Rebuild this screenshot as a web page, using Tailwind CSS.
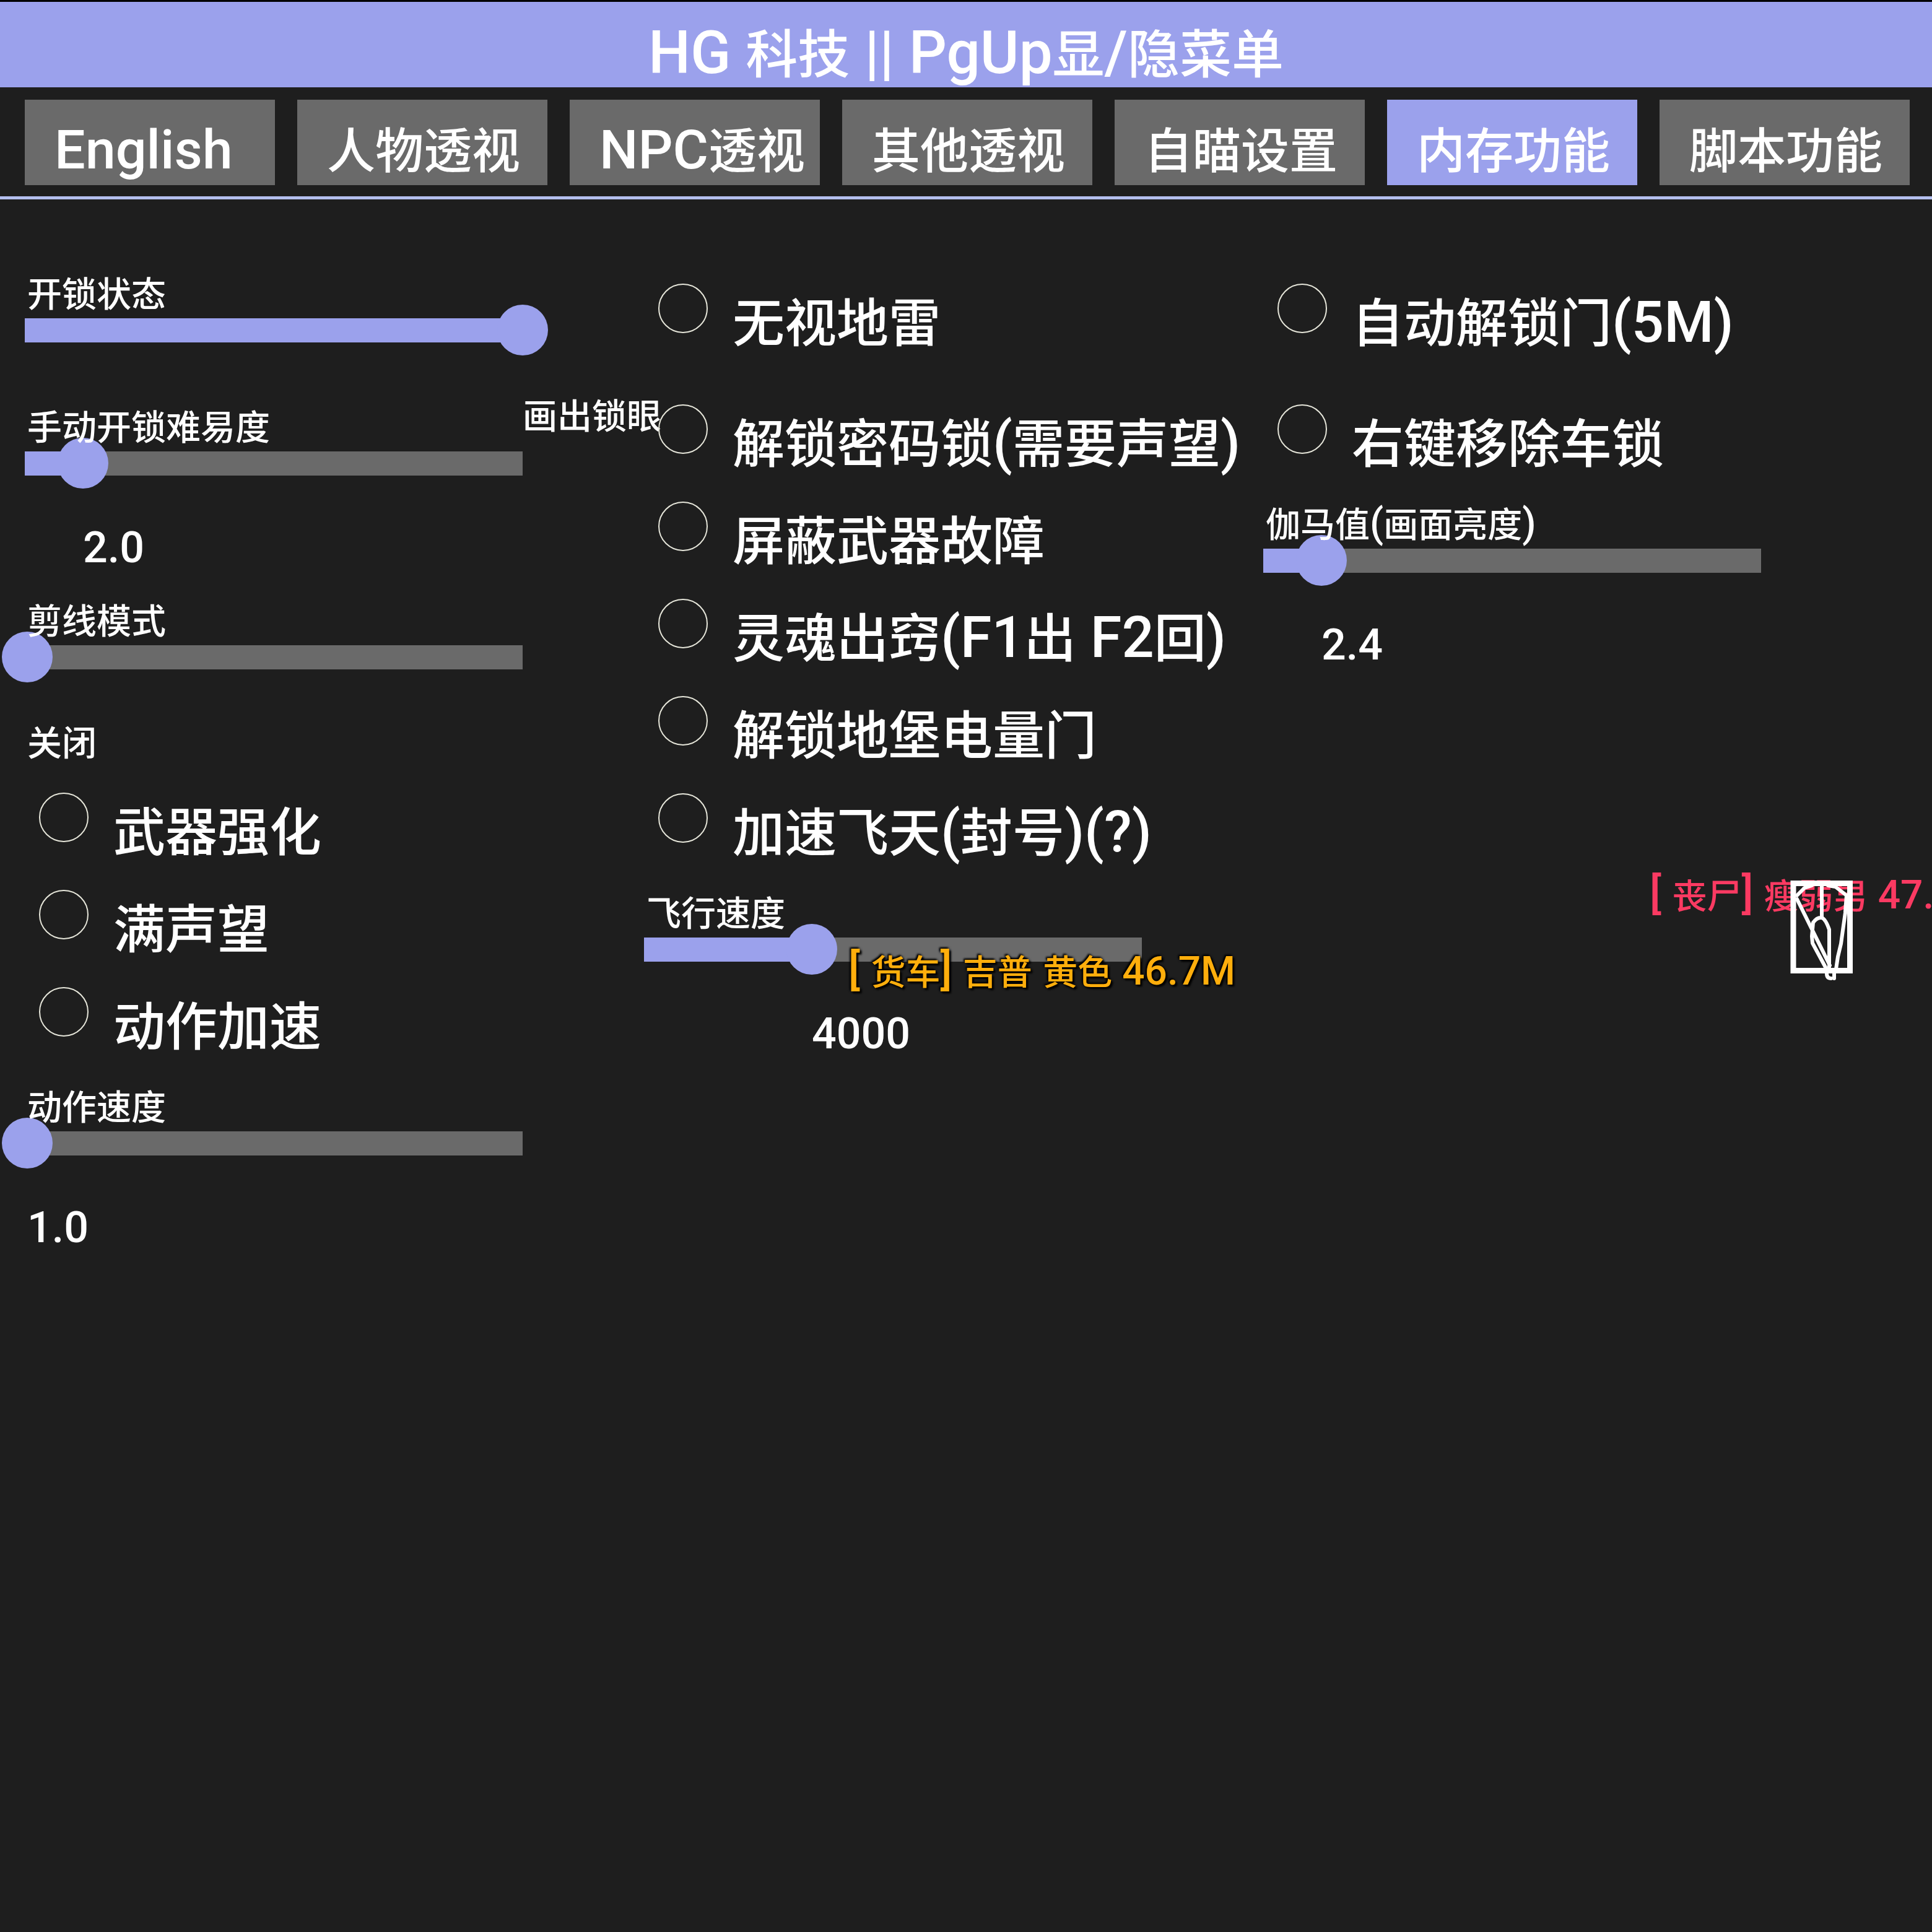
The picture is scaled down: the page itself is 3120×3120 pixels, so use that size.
<!DOCTYPE html>
<html lang="zh-CN">
<head>
  <meta charset="UTF-8" />
  <meta name="viewport" content="width=device-width, initial-scale=1.0" />
  <title>HG 科技</title>
  <script src="https://cdn.jsdelivr.net/npm/@tailwindcss/browser@4"></script>
</head>
<body class="relative min-h-screen overflow-x-hidden bg-[#1e1e1e] text-white font-medium font-['Roboto','Noto_Sans_CJK_SC',sans-serif]">

  <!-- 标题栏 -->
  <header class="h-[141px] border-t-3 border-black bg-[#9ba1ec] pt-8 text-center">
    <h1 class="text-[84px] leading-[100px] whitespace-nowrap"><span class="text-[96px]">HG </span>科技<span class="text-[96px]"> || PgUp</span>显<span class="text-[96px]">/</span>隐菜单</h1>
  </header>

  <!-- 标签页 -->
  <nav class="grid grid-cols-7 gap-9 border-b-5 border-[#b4bfee] pt-5 pr-9 pb-[18px] pl-10 text-[78px] leading-[96px] whitespace-nowrap">
    <button class="h-[138px] bg-[#6a6a6a] pt-8 pl-12 text-left"><span class="text-[88px] leading-0">English</span></button>
    <button class="h-[138px] bg-[#6a6a6a] pt-8 pl-12 text-left">人物透视</button>
    <button class="h-[138px] bg-[#6a6a6a] pt-8 pl-12 text-left"><span class="text-[88px] leading-0">NPC</span>透视</button>
    <button class="h-[138px] bg-[#6a6a6a] pt-8 pl-12 text-left">其他透视</button>
    <button class="h-[138px] bg-[#6a6a6a] pt-8 pl-12 text-left">自瞄设置</button>
    <button class="h-[138px] bg-[#9ba1ec] pt-8 pl-12 text-left">内存功能</button>
    <button class="h-[138px] bg-[#6a6a6a] pt-8 pl-12 text-left">脚本功能</button>
  </nav>

  <main class="grid grid-cols-[1000px_1000px_1fr] pt-[78px] pl-10 whitespace-nowrap">

    <!-- 第一列 -->
    <section>
      <div class="h-[215px] pt-12">
        <label for="lockState" class="relative z-10 block pl-1 text-[56px] leading-[56px]">开锁状态</label>
        <div class="-mt-3 grid grid-cols-[804px] items-center">
          <div class="h-[39px] bg-[#6a6a6a] [grid-area:1/1]"><div class="h-full bg-[#9ba1ec]" style="width: 100%"></div></div>
          <input id="lockState" type="range" min="0" max="1000" value="1000" class="-ml-[41px] h-[82px] w-[886px] appearance-none bg-transparent [grid-area:1/1] [&::-webkit-slider-thumb]:size-[82px] [&::-webkit-slider-thumb]:appearance-none [&::-webkit-slider-thumb]:rounded-full [&::-webkit-slider-thumb]:bg-[#9ba1ec]">
        </div>
        <div class="w-[804px] pt-[71px]"><output for="lockState" class="block text-[56px] leading-[56px]" style="margin-left: 100%">画出锁眼</output></div>
      </div>

      <div class="h-[313px] pt-12">
        <label for="lockLevel" class="relative z-10 block pl-1 text-[56px] leading-[56px]">手动开锁难易度</label>
        <div class="-mt-3 grid grid-cols-[804px] items-center">
          <div class="h-[39px] bg-[#6a6a6a] [grid-area:1/1]"><div class="h-full bg-[#9ba1ec]" style="width: 11.7%"></div></div>
          <input id="lockLevel" type="range" min="0" max="1000" value="117" class="-ml-[41px] h-[82px] w-[886px] appearance-none bg-transparent [grid-area:1/1] [&::-webkit-slider-thumb]:size-[82px] [&::-webkit-slider-thumb]:appearance-none [&::-webkit-slider-thumb]:rounded-full [&::-webkit-slider-thumb]:bg-[#9ba1ec]">
        </div>
        <div class="w-[804px] pt-[60px]"><output for="lockLevel" class="block text-[70px] leading-[70px]" style="margin-left: 11.7%">2.0</output></div>
      </div>

      <div class="h-[314px] pt-12">
        <label for="wireMode" class="relative z-10 block pl-1 text-[56px] leading-[56px]">剪线模式</label>
        <div class="-mt-3 grid grid-cols-[804px] items-center">
          <div class="h-[39px] bg-[#6a6a6a] [grid-area:1/1]"></div>
          <input id="wireMode" type="range" min="0" max="1000" value="5" class="-ml-[41px] h-[82px] w-[886px] appearance-none bg-transparent [grid-area:1/1] [&::-webkit-slider-thumb]:size-[82px] [&::-webkit-slider-thumb]:appearance-none [&::-webkit-slider-thumb]:rounded-full [&::-webkit-slider-thumb]:bg-[#9ba1ec]">
        </div>
        <div class="w-[804px] pt-[71px]"><output for="wireMode" class="block text-[56px] leading-[56px]" style="margin-left: 0.5%">关闭</output></div>
      </div>

      <div class="flex h-[157px] gap-10 pt-[38px] pl-[23px]">
        <input id="weapon" type="checkbox" class="size-20 appearance-none rounded-full border-2 border-[#e6e6da] checked:bg-[#9ba1ec]">
        <label for="weapon" class="pt-6 text-[84px] leading-[84px]">武器强化</label>
      </div>
      <div class="flex h-[157px] gap-10 pt-[38px] pl-[23px]">
        <input id="fame" type="checkbox" class="size-20 appearance-none rounded-full border-2 border-[#e6e6da] checked:bg-[#9ba1ec]">
        <label for="fame" class="pt-6 text-[84px] leading-[84px]">满声望</label>
      </div>
      <div class="flex h-[157px] gap-10 pt-[38px] pl-[23px]">
        <input id="action" type="checkbox" class="size-20 appearance-none rounded-full border-2 border-[#e6e6da] checked:bg-[#9ba1ec]">
        <label for="action" class="pt-6 text-[84px] leading-[84px]">动作加速</label>
      </div>

      <div class="h-[314px] pt-12">
        <label for="actionSpeed" class="relative z-10 block pl-1 text-[56px] leading-[56px]">动作速度</label>
        <div class="-mt-3 grid grid-cols-[804px] items-center">
          <div class="h-[39px] bg-[#6a6a6a] [grid-area:1/1]"></div>
          <input id="actionSpeed" type="range" min="0" max="1000" value="5" class="-ml-[41px] h-[82px] w-[886px] appearance-none bg-transparent [grid-area:1/1] [&::-webkit-slider-thumb]:size-[82px] [&::-webkit-slider-thumb]:appearance-none [&::-webkit-slider-thumb]:rounded-full [&::-webkit-slider-thumb]:bg-[#9ba1ec]">
        </div>
        <div class="w-[804px] pt-[60px]"><output for="actionSpeed" class="block text-[70px] leading-[70px]" style="margin-left: 0.5%">1.0</output></div>
      </div>
    </section>

    <!-- 第二列 -->
    <section class="pt-5">
      <div class="flex h-[195px] gap-10 pt-[38px] pl-[23px]">
        <input id="mines" type="checkbox" class="size-20 appearance-none rounded-full border-2 border-[#e6e6da] checked:bg-[#9ba1ec]">
        <label for="mines" class="pt-6 text-[84px] leading-[84px]">无视地雷</label>
      </div>
      <div class="flex h-[157px] gap-10 pt-[38px] pl-[23px]">
        <input id="codeLock" type="checkbox" class="size-20 appearance-none rounded-full border-2 border-[#e6e6da] checked:bg-[#9ba1ec]">
        <label for="codeLock" class="pt-6 text-[84px] leading-[84px]">解锁密码锁<span class="text-[92px] leading-0">(</span>需要声望<span class="text-[92px] leading-0">)</span></label>
      </div>
      <div class="flex h-[157px] gap-10 pt-[38px] pl-[23px]">
        <input id="malfunction" type="checkbox" class="size-20 appearance-none rounded-full border-2 border-[#e6e6da] checked:bg-[#9ba1ec]">
        <label for="malfunction" class="pt-6 text-[84px] leading-[84px]">屏蔽武器故障</label>
      </div>
      <div class="flex h-[157px] gap-10 pt-[38px] pl-[23px]">
        <input id="soul" type="checkbox" class="size-20 appearance-none rounded-full border-2 border-[#e6e6da] checked:bg-[#9ba1ec]">
        <label for="soul" class="pt-6 text-[84px] leading-[84px]">灵魂出窍<span class="text-[92px] leading-0">(F1</span>出<span class="text-[92px] leading-0"> F2</span>回<span class="text-[92px] leading-0">)</span></label>
      </div>
      <div class="flex h-[157px] gap-10 pt-[38px] pl-[23px]">
        <input id="bunker" type="checkbox" class="size-20 appearance-none rounded-full border-2 border-[#e6e6da] checked:bg-[#9ba1ec]">
        <label for="bunker" class="pt-6 text-[84px] leading-[84px]">解锁地堡电量门</label>
      </div>
      <div class="flex h-[157px] gap-10 pt-[38px] pl-[23px]">
        <input id="fly" type="checkbox" class="size-20 appearance-none rounded-full border-2 border-[#e6e6da] checked:bg-[#9ba1ec]">
        <label for="fly" class="pt-6 text-[84px] leading-[84px]">加速飞天<span class="text-[92px] leading-0">(</span>封号<span class="text-[92px] leading-0">)(?)</span></label>
      </div>

      <div class="h-[314px] pt-12">
        <label for="flySpeed" class="relative z-10 block pl-1 text-[56px] leading-[56px]">飞行速度</label>
        <div class="-mt-3 grid grid-cols-[804px] items-center">
          <div class="h-[39px] bg-[#6a6a6a] [grid-area:1/1]"><div class="h-full bg-[#9ba1ec]" style="width: 33.7%"></div></div>
          <input id="flySpeed" type="range" min="0" max="1000" value="337" class="-ml-[41px] h-[82px] w-[886px] appearance-none bg-transparent [grid-area:1/1] [&::-webkit-slider-thumb]:size-[82px] [&::-webkit-slider-thumb]:appearance-none [&::-webkit-slider-thumb]:rounded-full [&::-webkit-slider-thumb]:bg-[#9ba1ec]">
        </div>
        <div class="w-[804px] pt-[60px]"><output for="flySpeed" class="block text-[70px] leading-[70px]" style="margin-left: 33.7%">4000</output></div>
      </div>
    </section>

    <!-- 第三列 -->
    <section class="pt-5">
      <div class="flex h-[195px] gap-10 pt-[38px] pl-[23px]">
        <input id="doors" type="checkbox" class="size-20 appearance-none rounded-full border-2 border-[#e6e6da] checked:bg-[#9ba1ec]">
        <label for="doors" class="pt-6 text-[84px] leading-[84px]">自动解锁门<span class="text-[92px] leading-0">(5M)</span></label>
      </div>
      <div class="flex h-[157px] gap-10 pt-[38px] pl-[23px]">
        <input id="carLock" type="checkbox" class="size-20 appearance-none rounded-full border-2 border-[#e6e6da] checked:bg-[#9ba1ec]">
        <label for="carLock" class="pt-6 text-[84px] leading-[84px]">右键移除车锁</label>
      </div>

      <div class="h-[314px] pt-12">
        <label for="gamma" class="relative z-10 block pl-1 text-[56px] leading-[56px]">伽马值<span class="text-[64px] leading-0">(</span>画面亮度<span class="text-[64px] leading-0">)</span></label>
        <div class="-mt-3 grid grid-cols-[804px] items-center">
          <div class="h-[39px] bg-[#6a6a6a] [grid-area:1/1]"><div class="h-full bg-[#9ba1ec]" style="width: 11.7%"></div></div>
          <input id="gamma" type="range" min="0" max="1000" value="117" class="-ml-[41px] h-[82px] w-[886px] appearance-none bg-transparent [grid-area:1/1] [&::-webkit-slider-thumb]:size-[82px] [&::-webkit-slider-thumb]:appearance-none [&::-webkit-slider-thumb]:rounded-full [&::-webkit-slider-thumb]:bg-[#9ba1ec]">
        </div>
        <div class="w-[804px] pt-[60px]"><output for="gamma" class="block text-[70px] leading-[70px]" style="margin-left: 11.7%">2.4</output></div>
      </div>
    </section>
  </main>

  <!-- 画面上的透视标记 -->
  <div class="absolute top-[1543px] left-[1370px] z-20 text-[56px] leading-[56px] whitespace-nowrap text-[#ffae0c] [text-shadow:0_0_4px_#000,3px_3px_3px_#000,-2px_-2px_3px_#000]"><span class="text-[70px] leading-0">[ </span>货车<span class="text-[70px] leading-0">] </span>吉普<span class="text-[70px] leading-0"> </span>黄色<span class="text-[64px] leading-0"> 46.7M</span></div>

  <div class="absolute top-[1412px] left-[2664px] z-20 text-[56px] leading-[72px] whitespace-nowrap text-[#fb3a62]"><span class="text-[70px] leading-0">[ </span>丧尸<span class="text-[70px] leading-0">] </span>瘦弱男<span class="text-[64px] leading-0"> 47.</span></div>
  <svg class="absolute top-[1420px] left-[2890px] z-20 h-[166px] w-[104px]" viewBox="0 0 104 166" fill="none" stroke="#fff" aria-hidden="true">
    <path stroke-width="9" d="M6 6.500h91.500v141h-91.500z"/>
    <path stroke-width="6" stroke-linecap="round" stroke-linejoin="round" d="M12 26L24 14L36 10M62 10L74 12L92 26L90 52M52 10V60M12 32L65 139M58 142L37 103L36 92L38 70Q44 61 52 62Q58 64 64 81V142M90 54L87 75L83 104L78 125L75 145M60 152Q60 160 67 160M72 148V160"/>
  </svg>

</body>
</html>
